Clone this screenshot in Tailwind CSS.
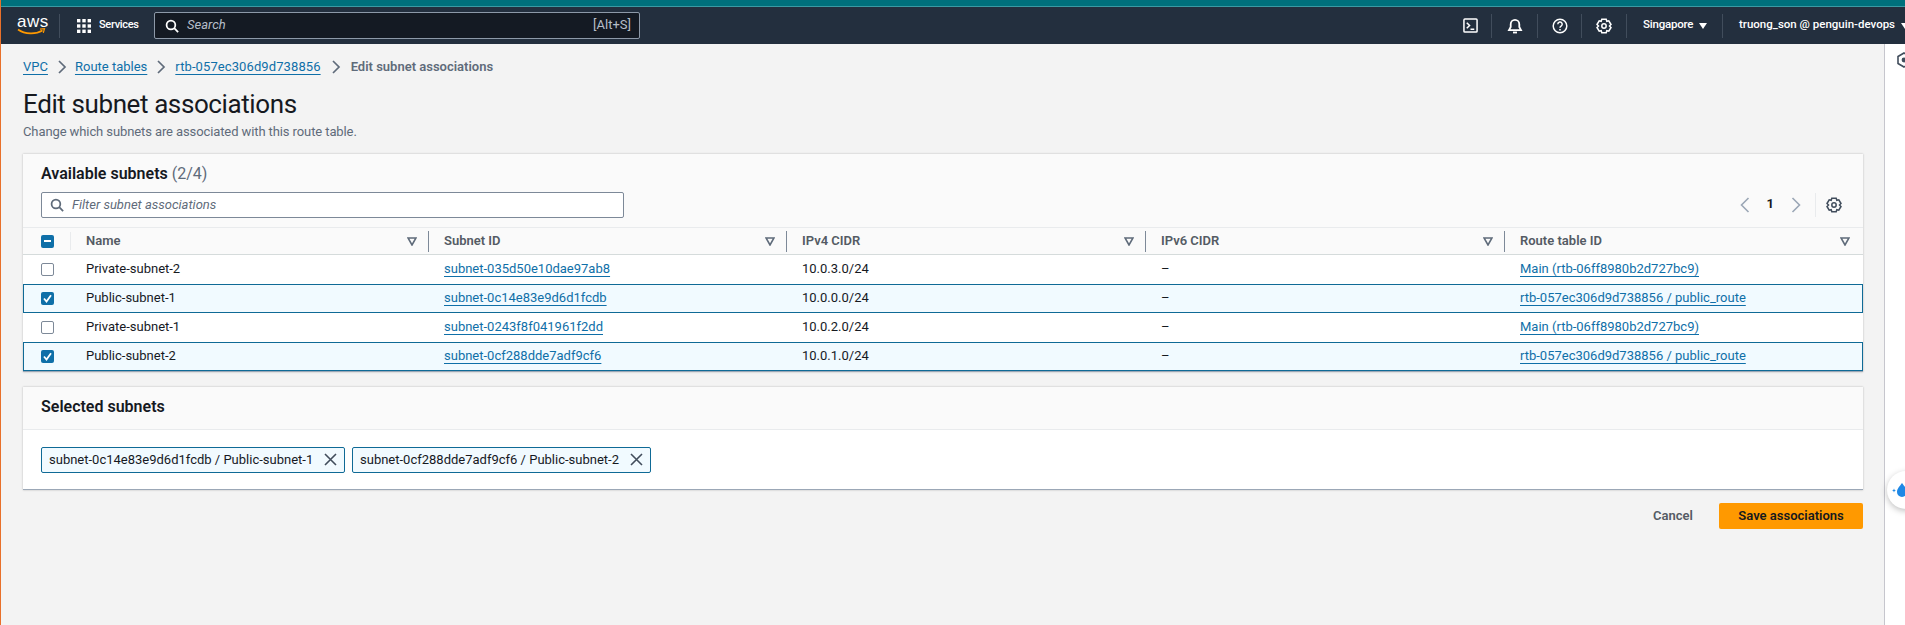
<!DOCTYPE html>
<html lang="en">
<head>
  <meta charset="UTF-8" />
  <title>Edit subnet associations</title>
  <script src="https://cdn.jsdelivr.net/npm/@tailwindcss/browser@4"></script>
</head>
<body class="h-[625px] overflow-hidden bg-[#f3f3f3] font-['Roboto',sans-serif] text-[14px] text-[#16191f]">
  <div class="absolute left-0 top-0 z-10 w-[1px] h-[625px] bg-[#e8702a]"></div>
  <div class="h-[7px] bg-[#00707c] border-b border-[#3a9aa3]"></div>

  <!-- top nav -->
  <header class="h-[37px] bg-[#232f3e] flex items-center text-white text-[12px] font-medium">
    <div class="w-[60px] h-[24px] border-r border-[#414d5c] pl-[17px] flex flex-col items-start">
      <span class="text-[17px] leading-[15px] font-['Liberation_Sans',sans-serif] tracking-[0.5px]">aws</span>
      <svg width="29" height="8" viewBox="0 0 29 8" class="-mt-[1px]"><path d="M1 1.5C8 6.5 19 6.5 25.5 2.5" fill="none" stroke="#ff9900" stroke-width="1.6"/><path d="M23 1.2l4.5 -.5-1.2 4.2" fill="none" stroke="#ff9900" stroke-width="1.2"/></svg>
    </div>
    <svg width="14" height="14" viewBox="0 0 14 14" fill="#fff" class="ml-[17px]">
      <rect x="0" y="0" width="3.4" height="3.4"/><rect x="5.3" y="0" width="3.4" height="3.4"/><rect x="10.6" y="0" width="3.4" height="3.4"/>
      <rect x="0" y="5.3" width="3.4" height="3.4"/><rect x="5.3" y="5.3" width="3.4" height="3.4"/><rect x="10.6" y="5.3" width="3.4" height="3.4"/>
      <rect x="0" y="10.6" width="3.4" height="3.4"/><rect x="5.3" y="10.6" width="3.4" height="3.4"/><rect x="10.6" y="10.6" width="3.4" height="3.4"/>
    </svg>
    <span class="ml-[8px] w-[55px] text-[11px] tracking-[-0.3px] -mt-[1px]">Services</span>
    <div class="w-[486px] h-[27px] bg-[#141a23] border border-[#8d99a8] rounded-[2px] flex items-center pl-[10px] pr-[8px] text-[#b6bec9] font-normal text-[13px]">
      <svg width="14" height="14" viewBox="0 0 16 16" fill="none" stroke="#fff" stroke-width="2"><circle cx="6.8" cy="6.8" r="5"/><path d="M10.5 10.5L15 15"/></svg>
      <span class="ml-[8px] italic -mt-[1px]">Search</span>
      <span class="ml-auto text-[13px] -mt-[1px]">[Alt+S]</span>
    </div>

    <div class="ml-auto flex items-center h-[24px]">
      <div class="w-[29px] h-full border-r border-[#414d5c] flex items-center">
        <svg width="15" height="15" viewBox="0 0 16 16" fill="none" stroke="#fff" stroke-width="1.6"><rect x="1" y="1" width="14" height="14" rx="1"/><path d="M4 5l3 3-3 3M8 12h4"/></svg>
      </div>
      <div class="w-[46px] h-full border-r border-[#414d5c] flex items-center justify-center">
        <svg width="16" height="16" viewBox="0 0 16 16" fill="none" stroke="#fff" stroke-width="1.8"><path d="M2 12.2h12L12.3 9V6.2a4.3 4.3 0 0 0-8.6 0V9z"/><path d="M6 14.5h4"/></svg>
      </div>
      <div class="w-[44px] h-full border-r border-[#414d5c] flex items-center justify-center">
        <svg width="16" height="16" viewBox="0 0 16 16" fill="none" stroke="#fff" stroke-width="1.5"><circle cx="8" cy="8" r="6.8"/><path d="M5.8 6.2a2.2 2.2 0 1 1 3.3 1.9c-.7.4-1.1.8-1.1 1.6"/><path d="M8 11v1.4"/></svg>
      </div>
      <div class="w-[45px] h-full border-r border-[#414d5c] flex items-center justify-center">
        <svg width="16" height="16" viewBox="0 0 16 16" fill="none" stroke="#fff" stroke-width="1.5"><path d="M5.8 1.3h4.4l.6 2 2-.5 2.2 3.7-1.5 1.5 1.5 1.5-2.2 3.7-2-.5-.6 2H5.8l-.6-2-2 .5L1 9.5 2.5 8 1 6.5l2.2-3.7 2 .5z"/><circle cx="8" cy="8" r="2.2"/></svg>
      </div>
      <div class="w-[96px] h-full border-r border-[#414d5c] flex items-center pl-[16px] text-[11.5px] tracking-[-0.2px]">
        <span class="-mt-[1px]">Singapore</span>
        <svg width="8" height="6" viewBox="0 0 8 6" fill="#fff" class="ml-[6px]"><path d="M0 0h8L4 6z"/></svg>
      </div>
      <div class="w-[182px] h-full flex items-center pl-[16px] text-[11.5px]">
        <span class="whitespace-nowrap -mt-[1px]">truong_son @ penguin-devops</span>
        <svg width="8" height="6" viewBox="0 0 8 6" fill="#fff" class="ml-[6px] shrink-0"><path d="M0 0h8L4 6z"/></svg>
      </div>
    </div>
  </header>

  <div class="flex h-[581px]">
    <main class="flex-1 pl-[23px] pr-[21px]">
      <nav class="pt-[9px] h-[37px] flex items-center text-[13px]">
        <a class="text-[#0f6fa8] underline underline-offset-3">VPC</a>
        <svg width="10" height="14" viewBox="0 0 10 14" fill="none" stroke="#5f6b7a" stroke-width="1.7" class="mx-[9px]"><path d="M2 1l6 6-6 6"/></svg>
        <a class="text-[#0f6fa8] underline underline-offset-3 -ml-[1px]">Route tables</a>
        <svg width="10" height="14" viewBox="0 0 10 14" fill="none" stroke="#5f6b7a" stroke-width="1.7" class="mx-[9px]"><path d="M2 1l6 6-6 6"/></svg>
        <a class="text-[#0f6fa8] underline underline-offset-3 tracking-[0.1px]">rtb-057ec306d9d738856</a>
        <svg width="10" height="14" viewBox="0 0 10 14" fill="none" stroke="#5f6b7a" stroke-width="1.7" class="mx-[10px]"><path d="M2 1l6 6-6 6"/></svg>
        <span class="text-[#5f6b7a] font-semibold">Edit subnet associations</span>
      </nav>
      <h1 class="mt-[5px] text-[26px] leading-[37px] font-normal tracking-[-0.4px]">Edit subnet associations</h1>
      <p class="text-[13px] leading-[18px] text-[#5f6b7a] tracking-[-0.1px]">Change which subnets are associated with this route table.</p>

      <!-- available subnets -->
      <section class="mt-[13px] bg-white border-b border-[#9ba7b6] shadow-[0_0_2px_rgba(0,0,0,0.25)]">
        <div class="h-[74px] bg-[#fafafa] px-[18px] border-b border-[#e9ebed]">
          <h2 class="pt-[9px] h-[38px] text-[16px] leading-[22px] font-semibold">Available subnets <span class="font-normal text-[#5f6b7a]">(2/4)</span></h2>
          <div class="flex items-center">
            <div class="w-[583px] h-[26px] bg-white border border-[#7d8998] rounded-[2px] flex items-center pl-[8px] text-[13px] italic text-[#5f6b7a]">
              <svg width="14" height="14" viewBox="0 0 16 16" fill="none" stroke="#5f6b7a" stroke-width="2"><circle cx="6.8" cy="6.8" r="5"/><path d="M10.5 10.5L15 15"/></svg>
              <span class="ml-[8px]">Filter subnet associations</span>
            </div>
            <div class="ml-auto flex items-center h-[24px] pr-[3px]">
              <svg width="10" height="16" viewBox="0 0 10 16" fill="none" stroke="#9ba7b6" stroke-width="1.6"><path d="M8.5 1l-7 7 7 7"/></svg>
              <span class="mx-[17px] text-[13px] font-bold -mt-[2px]">1</span>
              <svg width="10" height="16" viewBox="0 0 10 16" fill="none" stroke="#9ba7b6" stroke-width="1.6"><path d="M1.5 1l7 7-7 7"/></svg>
              <div class="w-[15px] h-full border-r border-[#e9ebed]"></div>
              <svg width="16" height="16" viewBox="0 0 16 16" fill="none" stroke="#414d5c" stroke-width="1.5" class="ml-[10px]"><path d="M5.8 1.3h4.4l.6 2 2-.5 2.2 3.7-1.5 1.5 1.5 1.5-2.2 3.7-2-.5-.6 2H5.8l-.6-2-2 .5L1 9.5 2.5 8 1 6.5l2.2-3.7 2 .5z"/><circle cx="8" cy="8" r="2.2"/></svg>
            </div>
          </div>
        </div>

        <div class="grid grid-cols-[48px_358px_358px_359px_359px_1fr] h-[27px] items-center bg-[#fafafa] border-b border-[#d5dbdb] text-[13px] font-semibold text-[#545b64]">
          <div class="pl-[18px] border-r border-[#e9ebed] h-[18px] flex items-center">
            <span class="w-[13px] h-[13px] rounded-[2px] bg-[#0f6fa8] flex items-center justify-center"><span class="w-[7px] h-[2px] bg-white"></span></span>
          </div>
          <div class="pl-[15px] pr-[11px] flex justify-between items-center h-[21px] border-r border-[#7d8998]"><span>Name</span><svg width="10" height="9" viewBox="0 0 10 9" fill="none" stroke="#5f6b7a" stroke-width="1.6"><path d="M1 1h8L5 8z"/></svg></div>
          <div class="pl-[15px] pr-[11px] flex justify-between items-center h-[21px] border-r border-[#7d8998]"><span>Subnet ID</span><svg width="10" height="9" viewBox="0 0 10 9" fill="none" stroke="#5f6b7a" stroke-width="1.6"><path d="M1 1h8L5 8z"/></svg></div>
          <div class="pl-[15px] pr-[11px] flex justify-between items-center h-[21px] border-r border-[#7d8998]"><span>IPv4 CIDR</span><svg width="10" height="9" viewBox="0 0 10 9" fill="none" stroke="#5f6b7a" stroke-width="1.6"><path d="M1 1h8L5 8z"/></svg></div>
          <div class="pl-[15px] pr-[11px] flex justify-between items-center h-[21px] border-r border-[#7d8998]"><span>IPv6 CIDR</span><svg width="10" height="9" viewBox="0 0 10 9" fill="none" stroke="#5f6b7a" stroke-width="1.6"><path d="M1 1h8L5 8z"/></svg></div>
          <div class="pl-[15px] pr-[13px] flex justify-between items-center h-[21px]"><span>Route table ID</span><svg width="10" height="9" viewBox="0 0 10 9" fill="none" stroke="#5f6b7a" stroke-width="1.6"><path d="M1 1h8L5 8z"/></svg></div>
        </div>

        <div class="grid grid-cols-[48px_358px_358px_359px_359px_1fr] h-[29px] items-center text-[13px]">
          <div class="pl-[18px]"><span class="block w-[13px] h-[13px] rounded-[2px] border border-[#7d8998] bg-white"></span></div>
          <div class="pl-[15px] -mt-[1px]">Private-subnet-2</div>
          <div class="pl-[15px] -mt-[1px]"><a class="text-[#0f6fa8] underline underline-offset-3">subnet-035d50e10dae97ab8</a></div>
          <div class="pl-[15px] -mt-[1px]">10.0.3.0/24</div>
          <div class="pl-[15px] -mt-[1px]">–</div>
          <div class="pl-[15px] -mt-[1px]"><a class="text-[#0f6fa8] underline underline-offset-3">Main (rtb-06ff8980b2d727bc9)</a></div>
        </div>
        <div class="grid grid-cols-[47px_358px_358px_359px_359px_1fr] h-[29px] items-center text-[13px] bg-[#f1faff] border border-[#0f6a96]">
          <div class="pl-[17px]"><span class="w-[13px] h-[13px] rounded-[2px] bg-[#0f6fa8] flex items-center justify-center"><svg width="9" height="9" viewBox="0 0 9 9" fill="none" stroke="#fff" stroke-width="1.8"><path d="M1 4.5l2.5 3L8 1.2"/></svg></span></div>
          <div class="pl-[15px] -mt-[1px]">Public-subnet-1</div>
          <div class="pl-[15px] -mt-[1px]"><a class="text-[#0f6fa8] underline underline-offset-3">subnet-0c14e83e9d6d1fcdb</a></div>
          <div class="pl-[15px] -mt-[1px]">10.0.0.0/24</div>
          <div class="pl-[15px] -mt-[1px]">–</div>
          <div class="pl-[15px] -mt-[1px]"><a class="text-[#0f6fa8] underline underline-offset-3">rtb-057ec306d9d738856 / public_route</a></div>
        </div>
        <div class="grid grid-cols-[48px_358px_358px_359px_359px_1fr] h-[29px] items-center text-[13px]">
          <div class="pl-[18px]"><span class="block w-[13px] h-[13px] rounded-[2px] border border-[#7d8998] bg-white"></span></div>
          <div class="pl-[15px] -mt-[1px]">Private-subnet-1</div>
          <div class="pl-[15px] -mt-[1px]"><a class="text-[#0f6fa8] underline underline-offset-3">subnet-0243f8f041961f2dd</a></div>
          <div class="pl-[15px] -mt-[1px]">10.0.2.0/24</div>
          <div class="pl-[15px] -mt-[1px]">–</div>
          <div class="pl-[15px] -mt-[1px]"><a class="text-[#0f6fa8] underline underline-offset-3">Main (rtb-06ff8980b2d727bc9)</a></div>
        </div>
        <div class="grid grid-cols-[47px_358px_358px_359px_359px_1fr] h-[29px] items-center text-[13px] bg-[#f1faff] border border-[#0f6a96]">
          <div class="pl-[17px]"><span class="w-[13px] h-[13px] rounded-[2px] bg-[#0f6fa8] flex items-center justify-center"><svg width="9" height="9" viewBox="0 0 9 9" fill="none" stroke="#fff" stroke-width="1.8"><path d="M1 4.5l2.5 3L8 1.2"/></svg></span></div>
          <div class="pl-[15px] -mt-[1px]">Public-subnet-2</div>
          <div class="pl-[15px] -mt-[1px]"><a class="text-[#0f6fa8] underline underline-offset-3">subnet-0cf288dde7adf9cf6</a></div>
          <div class="pl-[15px] -mt-[1px]">10.0.1.0/24</div>
          <div class="pl-[15px] -mt-[1px]">–</div>
          <div class="pl-[15px] -mt-[1px]"><a class="text-[#0f6fa8] underline underline-offset-3">rtb-057ec306d9d738856 / public_route</a></div>
        </div>
      </section>

      <!-- selected subnets -->
      <section class="mt-[15px] bg-white border-b border-[#9ba7b6] shadow-[0_0_2px_rgba(0,0,0,0.25)]">
        <div class="h-[43px] bg-[#fafafa] border-b border-[#e9ebed] px-[18px] pb-[3px] flex items-center text-[16px] font-semibold">Selected subnets</div>
        <div class="h-[59px] px-[18px] flex items-center gap-[7px] text-[13px]">
          <div class="h-[26px] w-[304px] bg-[#f1faff] border border-[#0f6a96] rounded-[2px] flex items-center pl-[7px] pr-[7px] justify-between">
            <span class="whitespace-nowrap">subnet-0c14e83e9d6d1fcdb / Public-subnet-1</span>
            <svg width="13" height="13" viewBox="0 0 13 13" fill="none" stroke="#414d5c" stroke-width="1.6"><path d="M1 1l11 11M12 1L1 12"/></svg>
          </div>
          <div class="h-[26px] w-[299px] bg-[#f1faff] border border-[#0f6a96] rounded-[2px] flex items-center pl-[7px] pr-[7px] justify-between">
            <span class="whitespace-nowrap">subnet-0cf288dde7adf9cf6 / Public-subnet-2</span>
            <svg width="13" height="13" viewBox="0 0 13 13" fill="none" stroke="#414d5c" stroke-width="1.6"><path d="M1 1l11 11M12 1L1 12"/></svg>
          </div>
        </div>
      </section>

      <div class="mt-[13px] flex items-center justify-end text-[13px] font-semibold">
        <span class="text-[#545b64] mr-[26px]">Cancel</span>
        <button class="w-[144px] h-[26px] bg-[#ff9900] rounded-[2px] text-[#16191f] font-semibold">Save associations</button>
      </div>
    </main>

    <aside class="w-[21px] bg-white border-l border-[#c6c6cd] relative">
      <svg width="16" height="16" viewBox="0 0 16 16" fill="none" stroke="#414d5c" stroke-width="1.6" class="absolute left-[11px] top-[8px]"><path d="M8 1l6 3.5v7L8 15l-6-3.5v-7z"/><circle cx="8" cy="8" r="1.6" fill="#414d5c"/></svg>
    </aside>
  </div>

  <!-- floating droplet button -->
  <div class="absolute left-[1887px] top-[471px] w-[40px] h-[38px] rounded-full bg-white shadow-[0_2px_6px_rgba(0,0,0,0.25)] flex items-center pl-[4px]">
    <svg width="22" height="16" viewBox="0 0 22 16" fill="#1e88e5"><path d="M3 6.5l.6 1.4L5 8.5l-1.4.6L3 10.5l-.6-1.4L1 8.5l1.4-.6z"/><path d="M11 1c2 3 5 5.5 5 9a5 5 0 0 1-10 0c0-3.5 3-6 5-9z"/></svg>
  </div>
</body>
</html>
